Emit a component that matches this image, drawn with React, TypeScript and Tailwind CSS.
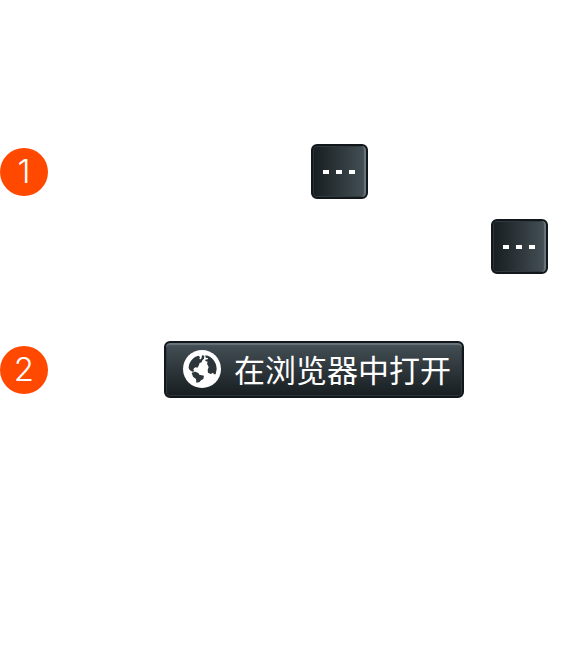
import type { ReactNode } from "react";

function StepBadge({ children }: { children: ReactNode }) {
  return (
    <span className="flex size-12 shrink-0 items-center justify-center rounded-full bg-[#ff4800] font-['Inter',sans-serif] text-[33px] leading-none font-light text-white">
      {children}
    </span>
  );
}

function MoreButton() {
  return (
    <button
      type="button"
      aria-label="更多"
      className="flex h-[55px] w-[57px] items-center justify-center gap-[7px] rounded-md border-2 border-[#11171b] bg-linear-to-r from-[#181e21] to-[#455157] pr-0.5 shadow-[inset_-2px_0_1px_#69757b,inset_0_0_0_1px_#2b3438]"
    >
      <span className="h-1 w-1.5 bg-white" />
      <span className="h-1 w-1.5 bg-white" />
      <span className="h-1 w-1.5 bg-white" />
    </button>
  );
}

function GlobeIcon() {
  return (
    <svg viewBox="3 3 114 114" className="size-[38px] shrink-0" aria-hidden="true">
      <circle cx="60" cy="60" r="57" fill="#fff" />
      <g fill="#2c3539">
        <path d="M20 57C20 40 31 25 49 20L54 24L52 30L57 31L59 25L60 19L67 20L66 29L61 34L59 40L53 42L50 50L46 56L40 55L36 58L34 63L38 67L31 68L23 63Z" />
        <path d="M70 19C90 22 104 40 104 60L101 76L95 76L94 71L86 75L78 71L77 63L80 54L75 44L77 38L70 36L70 32L77 31L78 27L71 26Z" />
        <path d="M29 71L40 68L49 72L52 77L66 80L64 90L57 94L53 99L43 101L42 90L33 83Z" />
      </g>
    </svg>
  );
}

export default function App() {
  return (
    <main className="flex min-h-screen flex-col gap-[67px] bg-white pt-36">
      <section className="flex flex-col gap-5 pr-[17px]">
        <div className="flex items-center gap-[263px]">
          <StepBadge>1</StepBadge>
          <MoreButton />
        </div>
        <div className="flex justify-end">
          <MoreButton />
        </div>
      </section>
      <section className="flex items-center gap-[116px]">
        <StepBadge>2</StepBadge>
        <button
          type="button"
          className="flex h-[57px] w-[300px] items-center gap-[13px] rounded-md border-2 border-[#11171b] bg-linear-to-b from-[#455157] to-[#181e21] px-[17px] pb-0.5 font-['Noto_Sans_CJK_SC',sans-serif] text-[31px] leading-none font-normal whitespace-nowrap text-white shadow-[inset_0_2px_1px_#69757b,inset_0_0_0_1px_#2b3438]"
        >
          <GlobeIcon />
          在浏览器中打开
        </button>
      </section>
    </main>
  );
}
